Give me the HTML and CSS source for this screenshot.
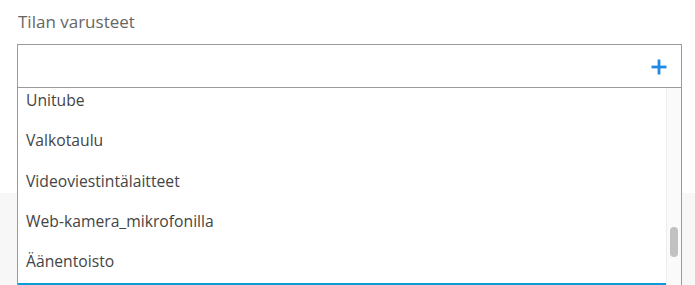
FILE: index.html
```html
<!DOCTYPE html>
<html lang="fi">
<head>
<meta charset="utf-8">
<title>Tilan varusteet</title>
<link rel="stylesheet" href="styles.css">
</head>
<body>
<div class="page">
  <div class="field">
    <label class="label">Tilan varusteet</label>
    <div class="input">
      <svg class="plus" width="16" height="16" viewBox="0 0 16 16" aria-hidden="true">
        <rect x="0.5" y="6.6" width="15" height="2.8" fill="#2289e3"/>
        <rect x="6.6" y="0.5" width="2.8" height="15" fill="#2289e3"/>
      </svg>
    </div>
  </div>
  <div class="band"></div>
  <div class="dropdown">
    <div class="list">
      <ul class="items">
        <li class="item">Unitube</li>
        <li class="item">Valkotaulu</li>
        <li class="item">Videoviestintälaitteet</li>
        <li class="item">Web-kamera_mikrofonilla</li>
        <li class="item">Äänentoisto</li>
        <li class="item item-active"></li>
      </ul>
    </div>
    <div class="scrollbar"><div class="thumb"></div></div>
  </div>
</div>
</body>
</html>
```
FILE: styles.css
```css
html, body {
  margin: 0;
  padding: 0;
  background: #fff;
  overflow: hidden;
}
.page {
  position: relative;
  width: 695px;
  height: 285px;
  font-family: "Open Sans", "Noto Sans", sans-serif;
}
.field {
  padding: 10px 0 0 17px;
  width: 665px;
}
.label {
  display: block;
  font-size: 17px;
  line-height: 24px;
  color: #666;
  padding-left: 1px;
  margin-bottom: 10px;
}
.input {
  box-sizing: border-box;
  height: 44px;
  border: 1px solid #9a9a9a;
  background: #fff;
  display: flex;
  align-items: center;
  justify-content: flex-end;
  padding-right: 14px;
}
.plus {
  display: block;
  margin-top: 1px;
}
.band {
  margin-top: 105px;
  height: 92px;
  background: #f7f7f7;
}
.dropdown {
  position: absolute;
  top: 88px;
  left: 17px;
  width: 665px;
  bottom: 0;
  box-sizing: border-box;
  border-left: 1px solid #9a9a9a;
  border-right: 1px solid #9a9a9a;
  background: #fff;
  display: flex;
  overflow: hidden;
}
.list {
  flex: 1;
  overflow: hidden;
}
.items {
  list-style: none;
  margin: -8px 0 0;
  padding: 0;
}
.item {
  padding: 10px 8px;
  font-size: 15.7px;
  line-height: 20.33px;
  color: #444;
}
.item-active {
  margin-top: 1.2px;
  border-top: 2px solid #0a9bd6;
}
.scrollbar {
  width: 14px;
  border-left: 1px solid #ececec;
  background: #fafafa;
  flex: none;
}
.thumb {
  margin: 139px 0 0 3px;
  width: 8px;
  height: 30px;
  border-radius: 4px;
  background: #c1c1c1;
}
```
